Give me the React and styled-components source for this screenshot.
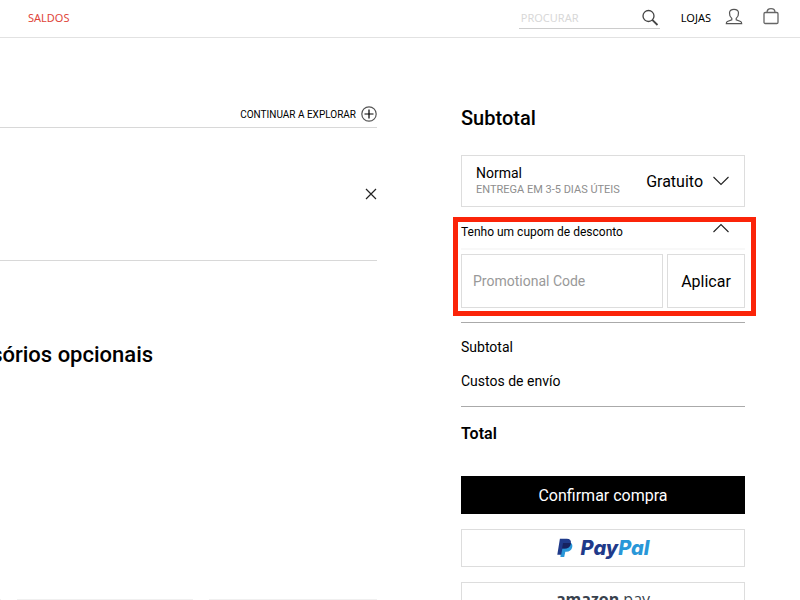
import { useState } from "react";
import styled, { createGlobalStyle, css } from "styled-components";

export default function App() {
  const [code, setCode] = useState("");

  return (
    <>
      <GlobalStyle />
      <Header>
        <SaleLink href="#saldos">SALDOS</SaleLink>
        <Tools>
          <Search role="search">
            <SearchInput type="search" placeholder="PROCURAR" aria-label="Procurar" />
            <IconButton type="submit" aria-label="Procurar">
              <SearchIcon />
            </IconButton>
          </Search>
          <StoresLink href="#lojas">LOJAS</StoresLink>
          <IconLink href="#conta" aria-label="Conta">
            <UserIcon />
          </IconLink>
          <IconLink href="#cesto" aria-label="Cesto">
            <BagIcon />
          </IconLink>
        </Tools>
      </Header>

      <Main>
        <Basket>
          <BasketTop>
            <ExploreLink href="#explorar">
              CONTINUAR A EXPLORAR
              <PlusIcon />
            </ExploreLink>
          </BasketTop>
          <BasketItem>
            <IconButton type="button" aria-label="Remover">
              <CloseIcon />
            </IconButton>
          </BasketItem>
          <OptionalTitle>Acessórios opcionais</OptionalTitle>
          <Cards>
            <Card />
            <Card />
            <Card />
          </Cards>
        </Basket>

        <Summary>
          <SummaryTitle>Subtotal</SummaryTitle>
          <Delivery type="button">
            <DeliveryText>
              <DeliveryName>Normal</DeliveryName>
              <DeliveryTime>ENTREGA EM 3-5 DIAS ÚTEIS</DeliveryTime>
            </DeliveryText>
            <DeliveryPrice>Gratuito</DeliveryPrice>
            <Chevron />
          </Delivery>

          <Coupon>
            <CouponToggle type="button" aria-expanded="true">
              Tenho um cupom de desconto
              <Chevron up />
            </CouponToggle>
            <CouponForm onSubmit={(e) => e.preventDefault()}>
              <CouponInput
                aria-label="Promotional Code"
                placeholder="Promotional Code"
                value={code}
                onChange={(e) => setCode(e.target.value)}
              />
              <ApplyButton type="submit">Aplicar</ApplyButton>
            </CouponForm>
          </Coupon>

          <Costs>
            <CostRow>Subtotal</CostRow>
            <CostRow>Custos de envío</CostRow>
          </Costs>
          <Total>Total</Total>

          <Payments>
            <PayButton type="button" $primary>
              Confirmar compra
            </PayButton>
            <PayButton type="button">
              <PayPalMark />
              <PayPalName>
                Pay<span>Pal</span>
              </PayPalName>
            </PayButton>
            <PayButton type="button">
              <AmazonName>
                <b>amazon</b> pay
              </AmazonName>
            </PayButton>
          </Payments>
        </Summary>
      </Main>
    </>
  );
}

function SearchIcon() {
  return (
    <svg width="18" height="18" viewBox="0 0 18 18" fill="none" stroke="#444">
      <circle cx="6.5" cy="8" r="5.5" strokeWidth="1.3" />
      <path d="M10.3 11.8l5.2 5.2" strokeWidth="1.8" />
    </svg>
  );
}

function UserIcon() {
  return (
    <svg width="18" height="18" viewBox="0 0 18 18" fill="none" stroke="#555" strokeWidth="1.2">
      <path d="M6.8 10.4C5 8.8 4.3 7 4.5 4.8C4.7 2.5 6.5 1.4 9 1.4s4.3 1.1 4.5 3.4c.2 2.2-.5 4-2.3 5.6v1.4l4.4 1.7c.8.4 1.1 1 1.1 2.2H1.3c0-1.2.3-1.8 1.1-2.2l4.4-1.7z" />
    </svg>
  );
}

function BagIcon() {
  return (
    <svg width="18" height="18" viewBox="0 0 18 18" fill="none" stroke="#666" strokeWidth="1.3">
      <rect x="2" y="4.5" width="14" height="11" rx="1.2" />
      <path d="M5 4.5C5 2 6.5.7 9 .7s4 1.3 4 3.8" />
    </svg>
  );
}

function PlusIcon() {
  return (
    <svg width="16" height="16" viewBox="0 0 16 16" fill="none">
      <circle cx="8" cy="8" r="7.2" stroke="#555" strokeWidth="1.2" />
      <path d="M8 3.5v9M3.5 8h9" stroke="#000" strokeWidth="1.2" />
    </svg>
  );
}

function CloseIcon() {
  return (
    <svg width="12" height="12" viewBox="0 0 12 12" stroke="#222" strokeWidth="1.2">
      <path d="M1 1l10 10M11 1L1 11" />
    </svg>
  );
}

function Chevron({ up }) {
  return (
    <svg width="16" height="10" viewBox="0 0 16 10" fill="none" stroke="#222" strokeWidth="1.1">
      <path d={up ? "M0.5 9L8 1.5L15.5 9" : "M0.5 1L8 8.5L15.5 1"} />
    </svg>
  );
}

function PayPalMark() {
  return (
    <svg width="16" height="20" viewBox="0 0 16 20">
      <path fill="#2997d8" d="M5 5h9c1.3 1 1.6 2.5 1.2 4.3-.7 3-2.8 4.4-5.7 4.4H8.3L7.2 19H3.4z" />
      <path fill="#1f3a8a" d="M2.9.8h6.9c3.2 0 4.6 1.7 4.1 4.7-.6 3.5-2.9 5.1-6.2 5.1H5.4L4.2 16.8H.3z" />
      <path fill="#16225f" d="M6 5h7.9c-.5 3.7-2.8 5.6-6.2 5.6H5.1z" />
    </svg>
  );
}

const GlobalStyle = createGlobalStyle`
  * {
    box-sizing: border-box;
  }

  body {
    margin: 0;
    overflow-x: hidden;
    background: #fff;
    color: #000;
    font-family: Roboto, "Liberation Sans", sans-serif;
  }

  button,
  input {
    font-family: inherit;
    color: inherit;
  }

  svg {
    display: block;
    flex: none;
  }
`;

const Header = styled.header`
  display: flex;
  align-items: center;
  justify-content: space-between;
  height: 38px;
  padding: 0 20px 2px 28px;
  border-bottom: 1px solid #e2e2e2;
  font-family: "Noto Sans", "Open Sans", sans-serif;
  font-size: 11px;
`;

const SaleLink = styled.a`
  color: #e0453a;
  text-decoration: none;
`;

const Tools = styled.div`
  display: flex;
  align-items: center;
`;

const Search = styled.form`
  display: flex;
  align-items: center;
  width: 141px;
  height: 22px;
  margin-right: 21px;
  border-bottom: 1px solid #ccc;
`;

const SearchInput = styled.input`
  flex: 1;
  min-width: 0;
  padding: 0 2px;
  border: 0;
  outline: 0;
  background: none;
  font-size: 11px;

  &::placeholder {
    color: #d8d8d8;
  }
`;

const IconButton = styled.button`
  display: flex;
  padding: 0;
  border: 0;
  background: none;
  cursor: pointer;
`;

const StoresLink = styled.a`
  color: #000;
  text-decoration: none;
`;

const IconLink = styled.a`
  display: flex;
  margin: 0 0 2px 14px;

  & + & {
    margin-left: 19px;
  }
`;

const Main = styled.main`
  display: grid;
  grid-template-columns: minmax(0, 1fr) 284px;
  gap: 84px;
  padding: 66px 55px 0 0;
`;

/* the basket runs off the left edge of the window */
const Basket = styled.section`
  margin-left: -174px;
  overflow: hidden;
`;

const BasketTop = styled.div`
  display: flex;
  justify-content: flex-end;
  height: 24px;
  border-bottom: 1px solid #d8d8d8;
`;

const ExploreLink = styled.a`
  display: flex;
  align-items: center;
  gap: 5px;
  height: 20px;
  color: #000;
  font-size: 10px;
  text-decoration: none;
`;

const BasketItem = styled.div`
  display: flex;
  align-items: center;
  justify-content: flex-end;
  height: 133px;
  border-bottom: 1px solid #d8d8d8;
`;

const OptionalTitle = styled.h2`
  margin: 80px 0 0;
  padding-left: 116px;
  font-size: 22px;
  font-weight: 500;
  line-height: 28px;
`;

const Cards = styled.div`
  display: grid;
  grid-template-columns: repeat(3, 1fr);
  gap: 16px;
  margin: 230px -7px 0 0;
`;

const Card = styled.article`
  height: 160px;
  border: 1px solid #f0f0f0;
`;

const Summary = styled.aside`
  display: flex;
  flex-direction: column;
`;

const SummaryTitle = styled.h2`
  margin: 0 0 23px;
  font-size: 20px;
  font-weight: 500;
  line-height: 28px;
`;

const boxed = css`
  border: 1px solid #ddd;
  background: #fff;
`;

const Delivery = styled.button`
  ${boxed}
  display: flex;
  align-items: center;
  height: 52px;
  padding: 0 15px 0 14px;
  text-align: left;
`;

const DeliveryText = styled.span`
  display: flex;
  flex: 1;
  flex-direction: column;
`;

const DeliveryName = styled.span`
  font-size: 14px;
  line-height: 18px;
`;

const DeliveryTime = styled.span`
  color: #8e8e8e;
  font-size: 11px;
  line-height: 16px;
`;

const DeliveryPrice = styled.span`
  margin-right: 10px;
  font-size: 16px;
`;

const Coupon = styled.section`
  margin: 10px -11px 6px -8px;
  padding: 0 6px 3px 3px;
  border: 5px solid #fb2409;
`;

const CouponToggle = styled.button`
  display: flex;
  align-items: flex-start;
  justify-content: space-between;
  width: 100%;
  height: 28px;
  margin-bottom: 4px;
  padding: 1px 16px 0 0;
  border: 0;
  border-bottom: 2px solid #f8f8f8;
  background: none;
  font-size: 12px;
  line-height: 18px;
`;

const CouponForm = styled.form`
  display: flex;
  gap: 4px;
`;

const CouponInput = styled.input`
  ${boxed}
  flex: 1;
  min-width: 0;
  height: 54px;
  padding: 0 11px;
  font-size: 14px;

  &::placeholder {
    color: #999;
  }
`;

const ApplyButton = styled.button`
  ${boxed}
  width: 78px;
  padding: 0;
  font-size: 16px;
`;

const Costs = styled.div`
  padding: 7px 0 8px;
  border-top: 1px solid #aaa;
  border-bottom: 1px solid #aaa;
`;

const CostRow = styled.div`
  font-size: 14px;
  line-height: 34px;
`;

const Total = styled.div`
  padding: 10px 0 25px;
  font-size: 16px;
  font-weight: 600;
  line-height: 34px;
`;

const Payments = styled.div`
  display: flex;
  flex-direction: column;
  gap: 15px;
`;

const PayButton = styled.button`
  display: flex;
  align-items: center;
  justify-content: center;
  gap: 8px;
  height: 38px;
  padding: 0;
  border: 1px solid ${({ $primary }) => ($primary ? "#000" : "#ddd")};
  background: ${({ $primary }) => ($primary ? "#000" : "#fff")};
  color: ${({ $primary }) => ($primary ? "#fff" : "#000")};
  font-size: 16px;
`;

const PayPalName = styled.span`
  color: #1f3a8a;
  font-family: Inter, sans-serif;
  font-size: 20px;
  font-style: italic;
  font-weight: 800;
  font-feature-settings: "cv11";
  line-height: 24px;

  span {
    color: #2997d8;
  }
`;

const AmazonName = styled.span`
  padding-bottom: 4px;
  color: #39424d;
  font-family: "Open Sans", sans-serif;
  font-size: 16px;
  line-height: 22px;
`;
